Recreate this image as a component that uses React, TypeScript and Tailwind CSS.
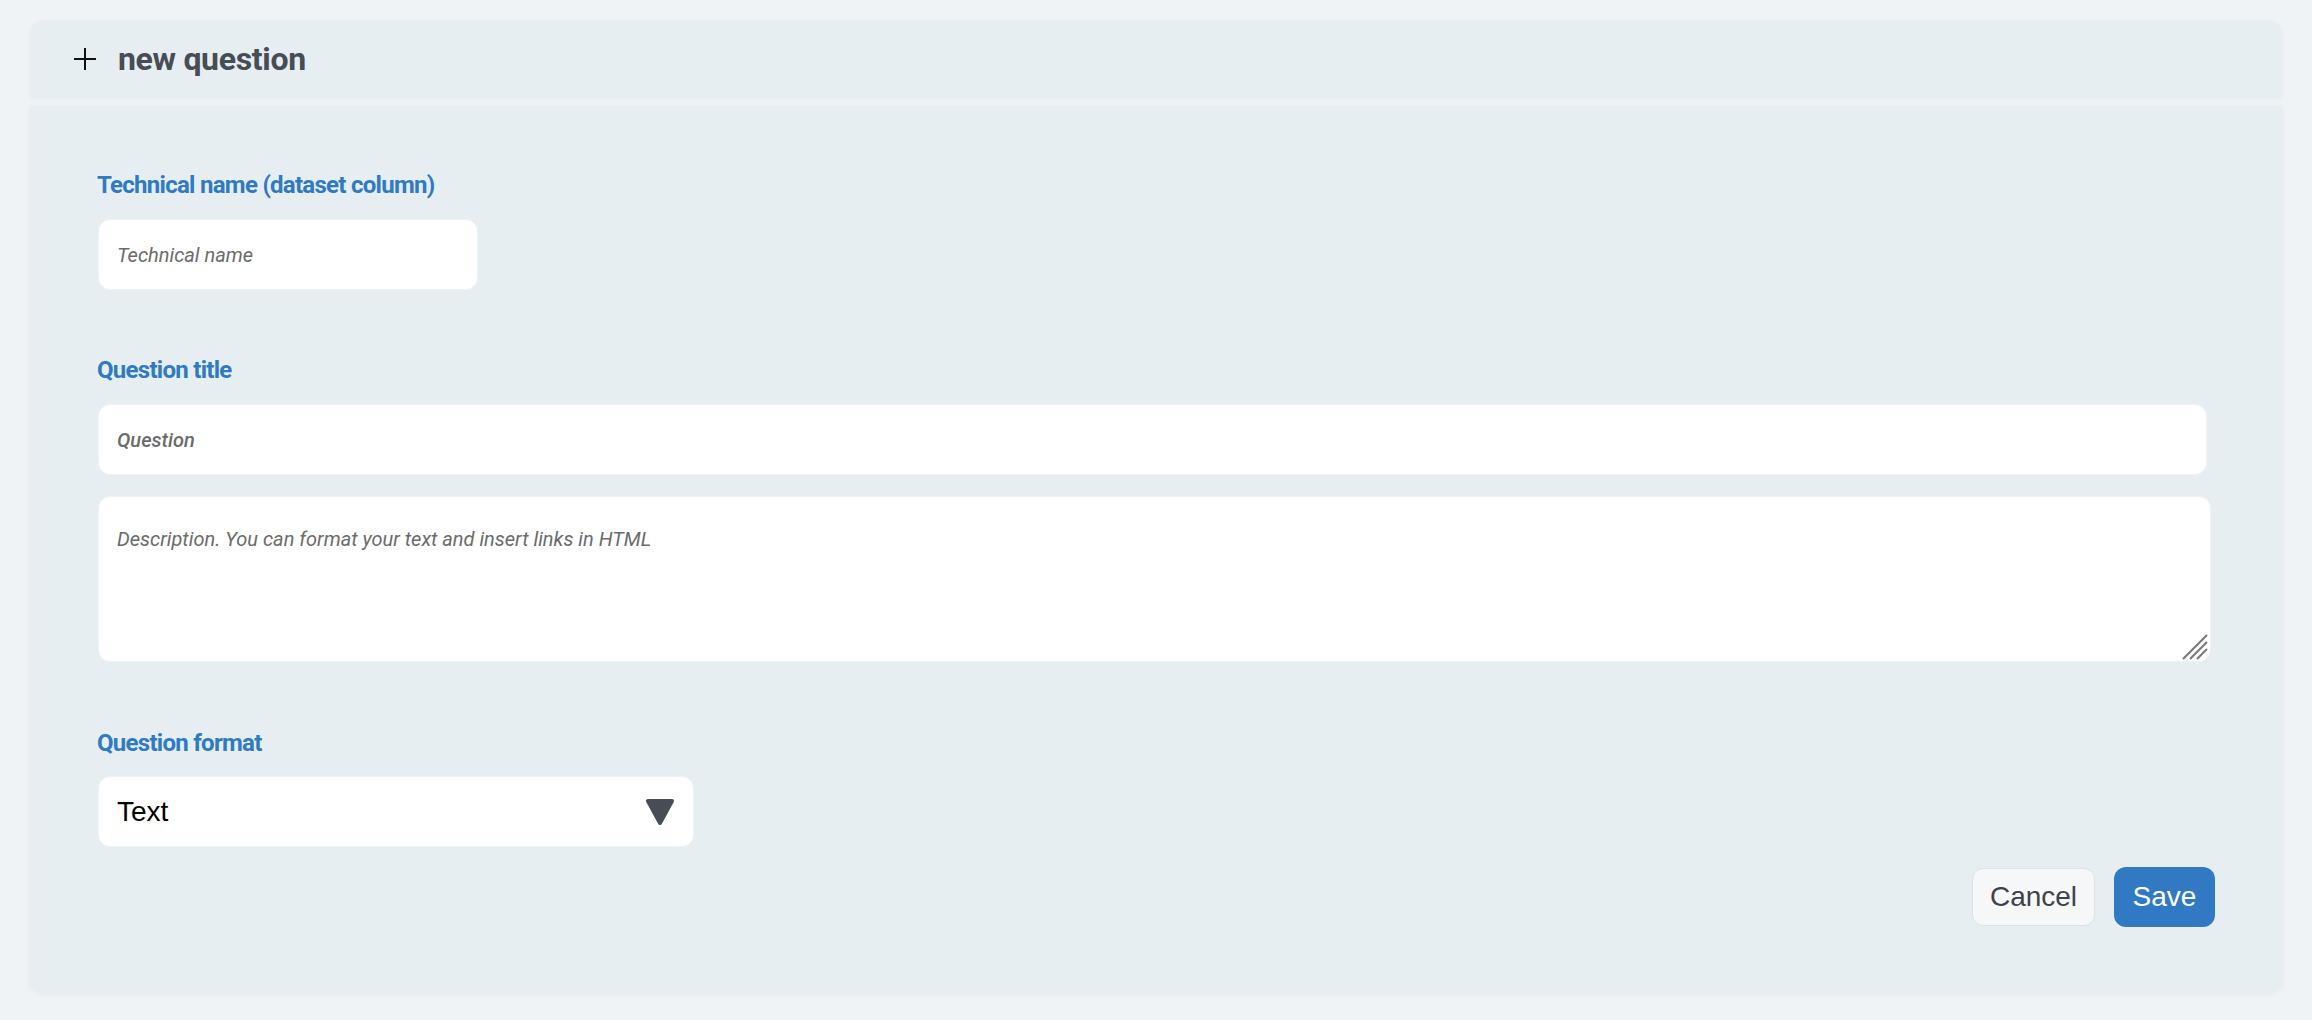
const PlusIcon = () => (
  <svg width="22" height="22" viewBox="0 0 22 22" fill="none" stroke="#111" strokeWidth="2">
    <path d="M11 0v22M0 11h22" />
  </svg>
);

const CaretDown = () => (
  <svg width="30" height="28" viewBox="0 0 30 28">
    <path d="M3 3h24L15 25z" fill="#474c55" stroke="#474c55" strokeWidth="4" strokeLinejoin="round" />
  </svg>
);

const ResizeGrip = () => (
  <svg width="26" height="26" viewBox="0 0 26 26" stroke="#777" strokeWidth="2">
    <path d="M1 25L25 1M8 25L25 8M15 25L25 15" />
  </svg>
);

const labelCls =
  "block h-[28px] font-['Roboto',sans-serif] text-[24px] leading-[28px] font-bold tracking-[-0.03em] text-[#2f7ac3]";

const inputCls =
  "ml-[1px] h-[71px] rounded-[12px] border-[1.5px] border-[#edf2f6] bg-white pl-[18px] font-['Roboto',sans-serif] text-[20px] outline-none placeholder:italic placeholder:text-[#6b6b6b]";

export default function App() {
  return (
    <div className="min-h-screen bg-[#eff3f6] px-[30px] pt-[20px] pb-[25px]">
      <div className="flex h-[78px] items-center rounded-t-[14px] bg-[#e6eef2] pl-[44px] shadow-[0_1px_4px_rgba(0,0,0,0.03)]">
        <PlusIcon />
        <h2 className="ml-[22px] font-['Roboto',sans-serif] text-[32px] font-bold tracking-[-0.01em] text-[#474c55]">
          new question
        </h2>
      </div>

      <div className="mt-[8px] rounded-b-[14px] bg-[#e6eef2] pt-[65px] pr-[67px] pb-[64px] pl-[67px] shadow-[0_2px_8px_rgba(0,0,0,0.05)]">
        <label className={labelCls}>Technical name (dataset column)</label>
        <input className={`${inputCls} mt-[20px] block w-[380px]`} placeholder="Technical name" />

        <label className={`${labelCls} mt-[66px]`}>Question title</label>
        <input
          className={`${inputCls} mt-[20px] block w-[2109px] placeholder:font-medium`}
          placeholder="Question"
        />

        <div className="relative mt-[21px] ml-[1px] h-[166px] w-[2113px]">
          <textarea
            className="block h-full w-full resize-none rounded-[12px] border-[1.5px] border-[#edf2f6] bg-white px-[18px] pt-[27px] font-['Roboto',sans-serif] text-[20px] outline-none placeholder:italic placeholder:text-[#6b6b6b]"
            placeholder="Description. You can format your text and insert links in HTML"
          />
          <div className="pointer-events-none absolute right-[3px] bottom-[2px]">
            <ResizeGrip />
          </div>
        </div>

        <label className={`${labelCls} mt-[67px]`}>Question format</label>
        <div className="mt-[19px] ml-[1px] flex h-[71px] w-[596px] items-center justify-between rounded-[12px] border-[1.5px] border-[#edf2f6] bg-white pr-[18px] pl-[18px]">
          <span className="font-['Liberation_Sans',Arial,sans-serif] text-[28px] text-black">Text</span>
          <CaretDown />
        </div>

        <div className="mt-[20px] flex items-center justify-end gap-[19px]">
          <button className="h-[58px] w-[123px] rounded-[11px] border-[1.5px] border-[#dde2e8] bg-[#f5f7f9] font-['Liberation_Sans',Arial,sans-serif] text-[28px] text-[#3e434a]">
            Cancel
          </button>
          <button className="h-[60px] w-[101px] rounded-[12px] bg-[#3179c3] font-['Liberation_Sans',Arial,sans-serif] text-[28px] text-white">
            Save
          </button>
        </div>
      </div>
    </div>
  );
}
